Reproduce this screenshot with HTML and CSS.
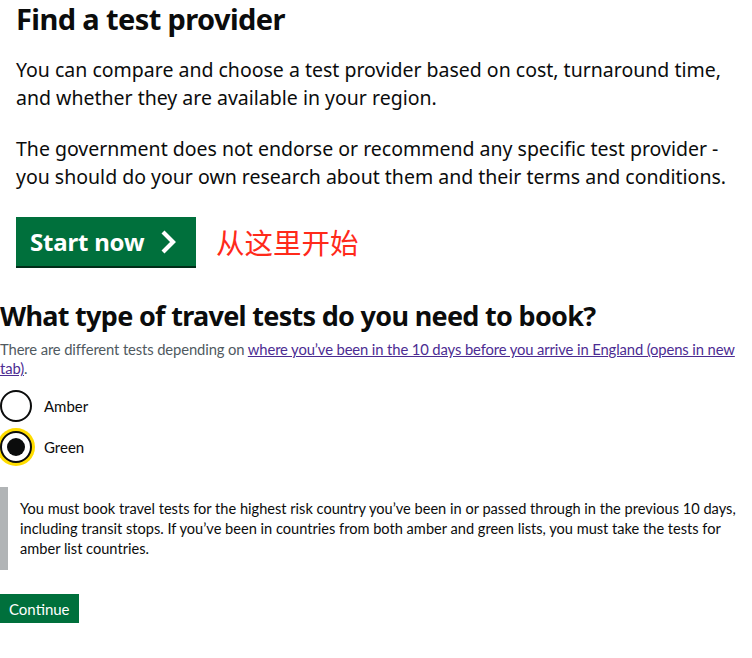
FILE: index.html
```html
<!DOCTYPE html>
<html lang="en">
<head>
<meta charset="utf-8">
<title>Find a test provider</title>
<link rel="stylesheet" href="styles.css">
</head>
<body>
<main class="page">
  <section class="intro">
    <h1 class="title">Find a test provider</h1>
    <p class="body-l">You can compare and choose a test provider based on cost, turnaround time, and whether they are available in your region.</p>
    <p class="body-l">The government does not endorse or recommend any specific test provider - you should do your own research about them and their terms and conditions.</p>
    <div class="start-row">
      <a class="start-btn" href="#">Start now
        <svg class="chev" width="20" height="24" viewBox="0 0 20 24" aria-hidden="true"><path d="M4 2 L14 12 L4 22" fill="none" stroke="#fff" stroke-width="4.2"/></svg>
      </a>
      <span class="note">从这里开始</span>
    </div>
  </section>
  <section class="form">
    <h2 class="question">What type of travel tests do you need to book?</h2>
    <p class="hint">There are different tests depending on <a class="link" href="#">where you’ve been in the 10 days before you arrive in England (opens in new tab)</a>.</p>
    <div class="radios">
      <label class="radio"><span class="circle"></span><span class="radio-label">Amber</span></label>
      <label class="radio"><span class="circle checked"></span><span class="radio-label">Green</span></label>
    </div>
    <div class="inset">You must book travel tests for the highest risk country you’ve been in or passed through in the previous 10 days, including transit stops. If you’ve been in countries from both amber and green lists, you must take the tests for amber list countries.</div>
    <button class="continue" type="button">Continue</button>
  </section>
</main>
</body>
</html>
```
FILE: styles.css
```css
* { box-sizing: border-box; }
html, body { margin: 0; padding: 0; background: #fff; }
body { font-family: "Noto Sans", "Noto Sans CJK SC", sans-serif; color: #0b0c0c; }
.page { width: 752px; }
.intro { padding-left: 16px; padding-top: 1px; }
.title { margin: 0; font-size: 29px; line-height: 35px; font-weight: 700; letter-spacing: -0.6px; }
.body-l { margin: 20px 0 0; font-size: 19.5px; line-height: 28px; }
.body-l + .body-l { margin-top: 23px; }
.start-row { display: flex; align-items: center; gap: 20px; margin-top: 26px; }
.start-btn { display: inline-flex; align-items: center; gap: 15px; width: 180px; height: 49px; padding: 0 14px; background: #00703c; box-shadow: 0 2px 0 #002d18; color: #fff; text-decoration: none; font-weight: 700; font-size: 24px; letter-spacing: -0.2px; }
.note { font-family: "Noto Sans CJK SC", sans-serif; color: #ff2a1a; font-size: 28.5px; line-height: 34px; }
.form { padding-top: 34px; }
.question { margin: 0; font-size: 27px; line-height: 32px; font-weight: 700; letter-spacing: -0.7px; }
.hint { margin: 8px 0 0; font-family: "Lato", sans-serif; font-size: 14.8px; line-height: 19px; letter-spacing: -0.12px; color: #505a5f; }
.link { color: #4c2c92; text-decoration: underline; }
.radios { margin-top: 12px; display: flex; flex-direction: column; gap: 9px; }
.radio { display: flex; align-items: center; gap: 12px; height: 32px; }
.circle { width: 32px; height: 32px; border: 2px solid #0b0c0c; border-radius: 50%; background: #fff; position: relative; flex: none; }
.circle.checked { box-shadow: 0 0 0 3px #ffdd00; }
.circle.checked::after { content: ""; position: absolute; left: 5px; top: 5px; width: 18px; height: 18px; border-radius: 50%; background: #0b0c0c; }
.radio-label { font-family: "Lato", sans-serif; font-size: 15px; }
.inset { margin-top: 24px; border-left: 8px solid #b1b4b6; padding: 12px 8px 0 12px; font-family: "Lato", sans-serif; font-size: 14.6px; line-height: 20px; height: 83px; }
.continue { margin-top: 24px; display: block; font-family: "Lato", sans-serif; font-size: 15px; color: #fff; background: #00703c; border: 0; box-shadow: 0 2px 0 #002d18; height: 29px; padding: 0 9px; }
```
